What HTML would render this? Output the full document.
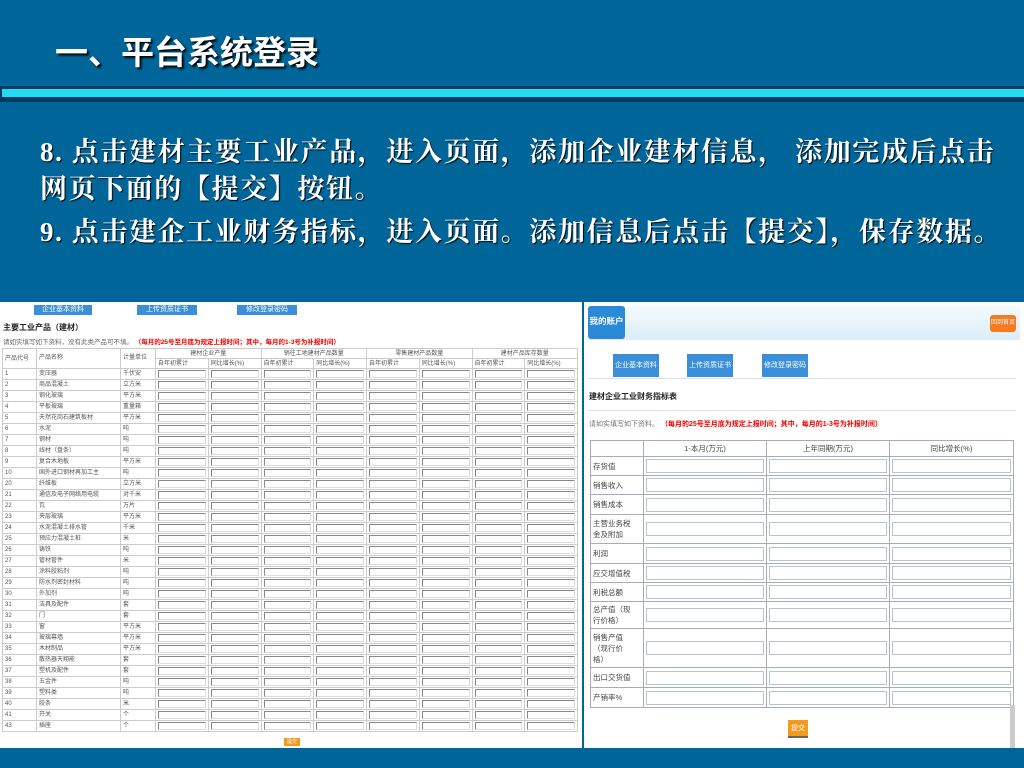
<!DOCTYPE html>
<html><head><meta charset="utf-8">
<style>
*{margin:0;padding:0;box-sizing:border-box}
body{width:1024px;height:768px;background:#006699;position:relative;overflow:hidden;font-family:"Liberation Sans","Noto Sans CJK SC",sans-serif}
.title{position:absolute;left:55px;top:26px;color:#fff;font-size:33px;font-weight:bold;text-shadow:2px 2px 2px #000;letter-spacing:0px}
.l1{position:absolute;left:0;top:86px;width:1024px;height:16px;background:#003a66}
.l2{position:absolute;left:2px;top:89px;width:1022px;height:8px;background:#22dcf0}
.txt{position:absolute;left:40px;top:134px;color:#fff;font-family:"Liberation Serif","Noto Serif CJK SC",serif;font-size:27px;letter-spacing:1.6px;font-weight:bold;line-height:37px;text-shadow:1px 1px 1px #000;white-space:nowrap}
.L{position:absolute;left:0;top:302px;width:582px;height:446px;background:#fff;overflow:hidden;font-size:7px;color:#555}
.R{position:absolute;left:584px;top:302px;width:440px;height:446px;background:#fff;overflow:hidden;font-size:8px;color:#444}
.btn{position:absolute;background:#3a8fd8;color:#fff;text-align:center;white-space:nowrap;overflow:hidden}
table{border-collapse:collapse;position:absolute;table-layout:fixed}
.lt tr{height:11px}
.lt td{border:1px solid #ccc;height:10px;padding:0 2px;white-space:nowrap;overflow:hidden;font-size:6px;line-height:9px}
.lt td.b{padding:0 2px}
.lt td.b span{display:block;height:8px;border:1px solid #888;border-right-color:#ddd;border-bottom-color:#ddd}
.rt td{border:1px solid #aab;padding:2px 2px;font-size:7.5px;vertical-align:middle}
.rt td.b span{display:block;height:14px;border:1px solid #b8c4d0;background:#fff}
</style></head><body>
<div class="title">一、平台系统登录</div>
<div class="l1"></div><div class="l2"></div>
<div class="txt">8. 点击建材主要工业产品，进入页面，添加企业建材信息， 添加完成后点击<br>网页下面的【提交】按钮。<br><span style="display:inline-block;margin-top:6px">9. 点击建企工业财务指标，进入页面。添加信息后点击【提交】，保存数据。</span></div>

<div class="L">
<div class="btn" style="left:34px;top:3px;width:58px;height:10px;font-size:7px;line-height:10px">企业基本资料</div>
<div class="btn" style="left:137px;top:3px;width:60px;height:10px;font-size:7px;line-height:10px">上传资质证书</div>
<div class="btn" style="left:237px;top:3px;width:60px;height:10px;font-size:7px;line-height:10px">修改登录密码</div>
<div style="position:absolute;left:3px;top:20px;font-size:8px;font-weight:bold;color:#222">主要工业产品（建材）</div>
<div style="position:absolute;left:3px;top:34px;font-size:6.5px;color:#666">请如实填写如下资料，没有此类产品可不填。 <span style="color:#e00;font-weight:bold">（每月的25号至月底为规定上报时间；其中，每月的1-3号为补报时间）</span></div>
<table class="lt" style="left:2px;top:46px;width:576px">
<colgroup><col style="width:34px"><col style="width:84px"><col style="width:35px"><col span="8"></colgroup>
<tr style="height:8px"><td rowspan="2" style="line-height:14px">产品代号</td><td rowspan="2">产品名称</td><td rowspan="2">计量单位</td><td colspan="2" style="text-align:center;height:7px;line-height:6px">建材企业产量</td><td colspan="2" style="text-align:center;line-height:6px">销往工地建材产品数量</td><td colspan="2" style="text-align:center;line-height:6px">零售建材产品数量</td><td colspan="2" style="text-align:center;line-height:6px">建材产品库存数量</td></tr>
<tr style="height:8px"><td style="height:7px;line-height:6px">自年初累计</td><td style="line-height:6px">同比增长(%)</td><td style="line-height:6px">自年初累计</td><td style="line-height:6px">同比增长(%)</td><td style="line-height:6px">自年初累计</td><td style="line-height:6px">同比增长(%)</td><td style="line-height:6px">自年初累计</td><td style="line-height:6px">同比增长(%)</td></tr>
<tr><td>1</td><td>变压器</td><td>千伏安</td><td class="b"><span></span></td><td class="b"><span></span></td><td class="b"><span></span></td><td class="b"><span></span></td><td class="b"><span></span></td><td class="b"><span></span></td><td class="b"><span></span></td><td class="b"><span></span></td></tr>
<tr><td>2</td><td>商品混凝土</td><td>立方米</td><td class="b"><span></span></td><td class="b"><span></span></td><td class="b"><span></span></td><td class="b"><span></span></td><td class="b"><span></span></td><td class="b"><span></span></td><td class="b"><span></span></td><td class="b"><span></span></td></tr>
<tr><td>3</td><td>钢化玻璃</td><td>平方米</td><td class="b"><span></span></td><td class="b"><span></span></td><td class="b"><span></span></td><td class="b"><span></span></td><td class="b"><span></span></td><td class="b"><span></span></td><td class="b"><span></span></td><td class="b"><span></span></td></tr>
<tr><td>4</td><td>平板玻璃</td><td>重量箱</td><td class="b"><span></span></td><td class="b"><span></span></td><td class="b"><span></span></td><td class="b"><span></span></td><td class="b"><span></span></td><td class="b"><span></span></td><td class="b"><span></span></td><td class="b"><span></span></td></tr>
<tr><td>5</td><td>天然花岗石建筑板材</td><td>平方米</td><td class="b"><span></span></td><td class="b"><span></span></td><td class="b"><span></span></td><td class="b"><span></span></td><td class="b"><span></span></td><td class="b"><span></span></td><td class="b"><span></span></td><td class="b"><span></span></td></tr>
<tr><td>6</td><td>水泥</td><td>吨</td><td class="b"><span></span></td><td class="b"><span></span></td><td class="b"><span></span></td><td class="b"><span></span></td><td class="b"><span></span></td><td class="b"><span></span></td><td class="b"><span></span></td><td class="b"><span></span></td></tr>
<tr><td>7</td><td>钢材</td><td>吨</td><td class="b"><span></span></td><td class="b"><span></span></td><td class="b"><span></span></td><td class="b"><span></span></td><td class="b"><span></span></td><td class="b"><span></span></td><td class="b"><span></span></td><td class="b"><span></span></td></tr>
<tr><td>8</td><td>线材（盘条）</td><td>吨</td><td class="b"><span></span></td><td class="b"><span></span></td><td class="b"><span></span></td><td class="b"><span></span></td><td class="b"><span></span></td><td class="b"><span></span></td><td class="b"><span></span></td><td class="b"><span></span></td></tr>
<tr><td>9</td><td>复合木地板</td><td>平方米</td><td class="b"><span></span></td><td class="b"><span></span></td><td class="b"><span></span></td><td class="b"><span></span></td><td class="b"><span></span></td><td class="b"><span></span></td><td class="b"><span></span></td><td class="b"><span></span></td></tr>
<tr><td>10</td><td>国外进口钢材再加工主</td><td>吨</td><td class="b"><span></span></td><td class="b"><span></span></td><td class="b"><span></span></td><td class="b"><span></span></td><td class="b"><span></span></td><td class="b"><span></span></td><td class="b"><span></span></td><td class="b"><span></span></td></tr>
<tr><td>20</td><td>纤维板</td><td>立方米</td><td class="b"><span></span></td><td class="b"><span></span></td><td class="b"><span></span></td><td class="b"><span></span></td><td class="b"><span></span></td><td class="b"><span></span></td><td class="b"><span></span></td><td class="b"><span></span></td></tr>
<tr><td>21</td><td>通信及电子网络用电缆</td><td>对千米</td><td class="b"><span></span></td><td class="b"><span></span></td><td class="b"><span></span></td><td class="b"><span></span></td><td class="b"><span></span></td><td class="b"><span></span></td><td class="b"><span></span></td><td class="b"><span></span></td></tr>
<tr><td>22</td><td>瓦</td><td>万片</td><td class="b"><span></span></td><td class="b"><span></span></td><td class="b"><span></span></td><td class="b"><span></span></td><td class="b"><span></span></td><td class="b"><span></span></td><td class="b"><span></span></td><td class="b"><span></span></td></tr>
<tr><td>23</td><td>夹层玻璃</td><td>平方米</td><td class="b"><span></span></td><td class="b"><span></span></td><td class="b"><span></span></td><td class="b"><span></span></td><td class="b"><span></span></td><td class="b"><span></span></td><td class="b"><span></span></td><td class="b"><span></span></td></tr>
<tr><td>24</td><td>水泥混凝土排水管</td><td>千米</td><td class="b"><span></span></td><td class="b"><span></span></td><td class="b"><span></span></td><td class="b"><span></span></td><td class="b"><span></span></td><td class="b"><span></span></td><td class="b"><span></span></td><td class="b"><span></span></td></tr>
<tr><td>25</td><td>预应力混凝土桩</td><td>米</td><td class="b"><span></span></td><td class="b"><span></span></td><td class="b"><span></span></td><td class="b"><span></span></td><td class="b"><span></span></td><td class="b"><span></span></td><td class="b"><span></span></td><td class="b"><span></span></td></tr>
<tr><td>26</td><td>铸铁</td><td>吨</td><td class="b"><span></span></td><td class="b"><span></span></td><td class="b"><span></span></td><td class="b"><span></span></td><td class="b"><span></span></td><td class="b"><span></span></td><td class="b"><span></span></td><td class="b"><span></span></td></tr>
<tr><td>27</td><td>管材管件</td><td>米</td><td class="b"><span></span></td><td class="b"><span></span></td><td class="b"><span></span></td><td class="b"><span></span></td><td class="b"><span></span></td><td class="b"><span></span></td><td class="b"><span></span></td><td class="b"><span></span></td></tr>
<tr><td>28</td><td>涂料胶粘剂</td><td>吨</td><td class="b"><span></span></td><td class="b"><span></span></td><td class="b"><span></span></td><td class="b"><span></span></td><td class="b"><span></span></td><td class="b"><span></span></td><td class="b"><span></span></td><td class="b"><span></span></td></tr>
<tr><td>29</td><td>防水剂密封材料</td><td>吨</td><td class="b"><span></span></td><td class="b"><span></span></td><td class="b"><span></span></td><td class="b"><span></span></td><td class="b"><span></span></td><td class="b"><span></span></td><td class="b"><span></span></td><td class="b"><span></span></td></tr>
<tr><td>30</td><td>外加剂</td><td>吨</td><td class="b"><span></span></td><td class="b"><span></span></td><td class="b"><span></span></td><td class="b"><span></span></td><td class="b"><span></span></td><td class="b"><span></span></td><td class="b"><span></span></td><td class="b"><span></span></td></tr>
<tr><td>31</td><td>洁具及配件</td><td>套</td><td class="b"><span></span></td><td class="b"><span></span></td><td class="b"><span></span></td><td class="b"><span></span></td><td class="b"><span></span></td><td class="b"><span></span></td><td class="b"><span></span></td><td class="b"><span></span></td></tr>
<tr><td>32</td><td>门</td><td>套</td><td class="b"><span></span></td><td class="b"><span></span></td><td class="b"><span></span></td><td class="b"><span></span></td><td class="b"><span></span></td><td class="b"><span></span></td><td class="b"><span></span></td><td class="b"><span></span></td></tr>
<tr><td>33</td><td>窗</td><td>平方米</td><td class="b"><span></span></td><td class="b"><span></span></td><td class="b"><span></span></td><td class="b"><span></span></td><td class="b"><span></span></td><td class="b"><span></span></td><td class="b"><span></span></td><td class="b"><span></span></td></tr>
<tr><td>34</td><td>玻璃幕墙</td><td>平方米</td><td class="b"><span></span></td><td class="b"><span></span></td><td class="b"><span></span></td><td class="b"><span></span></td><td class="b"><span></span></td><td class="b"><span></span></td><td class="b"><span></span></td><td class="b"><span></span></td></tr>
<tr><td>35</td><td>木材制品</td><td>平方米</td><td class="b"><span></span></td><td class="b"><span></span></td><td class="b"><span></span></td><td class="b"><span></span></td><td class="b"><span></span></td><td class="b"><span></span></td><td class="b"><span></span></td><td class="b"><span></span></td></tr>
<tr><td>36</td><td>散热器天翔能</td><td>套</td><td class="b"><span></span></td><td class="b"><span></span></td><td class="b"><span></span></td><td class="b"><span></span></td><td class="b"><span></span></td><td class="b"><span></span></td><td class="b"><span></span></td><td class="b"><span></span></td></tr>
<tr><td>37</td><td>塑机及配件</td><td>套</td><td class="b"><span></span></td><td class="b"><span></span></td><td class="b"><span></span></td><td class="b"><span></span></td><td class="b"><span></span></td><td class="b"><span></span></td><td class="b"><span></span></td><td class="b"><span></span></td></tr>
<tr><td>38</td><td>五金件</td><td>吨</td><td class="b"><span></span></td><td class="b"><span></span></td><td class="b"><span></span></td><td class="b"><span></span></td><td class="b"><span></span></td><td class="b"><span></span></td><td class="b"><span></span></td><td class="b"><span></span></td></tr>
<tr><td>39</td><td>塑料类</td><td>吨</td><td class="b"><span></span></td><td class="b"><span></span></td><td class="b"><span></span></td><td class="b"><span></span></td><td class="b"><span></span></td><td class="b"><span></span></td><td class="b"><span></span></td><td class="b"><span></span></td></tr>
<tr><td>40</td><td>胶条</td><td>米</td><td class="b"><span></span></td><td class="b"><span></span></td><td class="b"><span></span></td><td class="b"><span></span></td><td class="b"><span></span></td><td class="b"><span></span></td><td class="b"><span></span></td><td class="b"><span></span></td></tr>
<tr><td>41</td><td>开关</td><td>个</td><td class="b"><span></span></td><td class="b"><span></span></td><td class="b"><span></span></td><td class="b"><span></span></td><td class="b"><span></span></td><td class="b"><span></span></td><td class="b"><span></span></td><td class="b"><span></span></td></tr>
<tr><td>43</td><td>插座</td><td>个</td><td class="b"><span></span></td><td class="b"><span></span></td><td class="b"><span></span></td><td class="b"><span></span></td><td class="b"><span></span></td><td class="b"><span></span></td><td class="b"><span></span></td><td class="b"><span></span></td></tr>
</table>
<div style="position:absolute;left:284px;top:436px;width:16px;height:8px;background:#f39a1e;color:#fff;font-size:5px;text-align:center;line-height:8px">提交</div>
</div>

<div class="R">
<div style="position:absolute;left:5px;top:4px;width:431px;height:34px;background:linear-gradient(#f4fafe,#dcedf8)"></div>
<div style="position:absolute;left:4px;top:4px;width:37px;height:33px;background:#2a8ad8;border-radius:3px;color:#fff;font-size:8.5px;font-weight:bold;line-height:30px;text-align:center;white-space:nowrap">我的账户</div>
<div style="position:absolute;left:406px;top:13px;width:26px;height:17px;background:#f57a20;border-radius:3px;color:#fff;font-size:6px;line-height:17px;text-align:center;white-space:nowrap;overflow:hidden">回到首页</div>
<div class="btn" style="left:29px;top:52px;width:46px;height:23px;font-size:7px;line-height:23px">企业基本资料</div>
<div class="btn" style="left:103px;top:52px;width:46px;height:23px;font-size:7px;line-height:23px">上传资质证书</div>
<div class="btn" style="left:178px;top:52px;width:46px;height:23px;font-size:7px;line-height:23px">修改登录密码</div>
<div style="position:absolute;left:4px;top:76px;width:428px;height:1px;background:#dde"></div>
<div style="position:absolute;left:5px;top:89px;font-size:8px;font-weight:bold;color:#222">建材企业工业财务指标表</div>
<div style="position:absolute;left:4px;top:108px;width:428px;height:1px;background:#dde"></div>
<div style="position:absolute;left:5px;top:117px;font-size:7px;color:#777">请如实填写如下资料。 <span style="color:#e00;font-weight:bold">（每月的25号至月底为规定上报时间；其中，每月的1-3号为补报时间）</span></div>
<table class="rt" style="left:6px;top:138px;width:423px">
<colgroup><col style="width:53px"><col style="width:123px"><col style="width:123px"><col style="width:124px"></colgroup>
<tr><td style="height:15px"></td><td style="text-align:center">1-本月(万元)</td><td style="text-align:center">上年同期(万元)</td><td style="text-align:center">同比增长(%)</td></tr>
<tr style="height:18px"><td>存货值</td><td class="b"><span></span></td><td class="b"><span></span></td><td class="b"><span></span></td></tr>
<tr style="height:19px"><td>销售收入</td><td class="b"><span></span></td><td class="b"><span></span></td><td class="b"><span></span></td></tr>
<tr style="height:20px"><td>销售成本</td><td class="b"><span></span></td><td class="b"><span></span></td><td class="b"><span></span></td></tr>
<tr style="height:29px"><td>主营业务税<br>金及附加</td><td class="b"><span></span></td><td class="b"><span></span></td><td class="b"><span></span></td></tr>
<tr style="height:20px"><td>利润</td><td class="b"><span></span></td><td class="b"><span></span></td><td class="b"><span></span></td></tr>
<tr style="height:19px"><td>应交增值税</td><td class="b"><span></span></td><td class="b"><span></span></td><td class="b"><span></span></td></tr>
<tr style="height:19px"><td>利税总额</td><td class="b"><span></span></td><td class="b"><span></span></td><td class="b"><span></span></td></tr>
<tr style="height:27px"><td>总产值（现<br>行价格）</td><td class="b"><span></span></td><td class="b"><span></span></td><td class="b"><span></span></td></tr>
<tr style="height:39px"><td>销售产值<br>（现行价<br>格）</td><td class="b"><span></span></td><td class="b"><span></span></td><td class="b"><span></span></td></tr>
<tr style="height:20px"><td>出口交货值</td><td class="b"><span></span></td><td class="b"><span></span></td><td class="b"><span></span></td></tr>
<tr style="height:20px"><td>产销率%</td><td class="b"><span></span></td><td class="b"><span></span></td><td class="b"><span></span></td></tr>
</table>
<div style="position:absolute;left:426px;top:403px;width:5px;height:43px;background:#ccc"></div>
<div style="position:absolute;left:204px;top:418px;width:20px;height:18px;background:#f39a1e;color:#fff;font-size:7px;text-align:center;line-height:18px;border-bottom:2px solid #666">提交</div>
</div>
</body></html>
